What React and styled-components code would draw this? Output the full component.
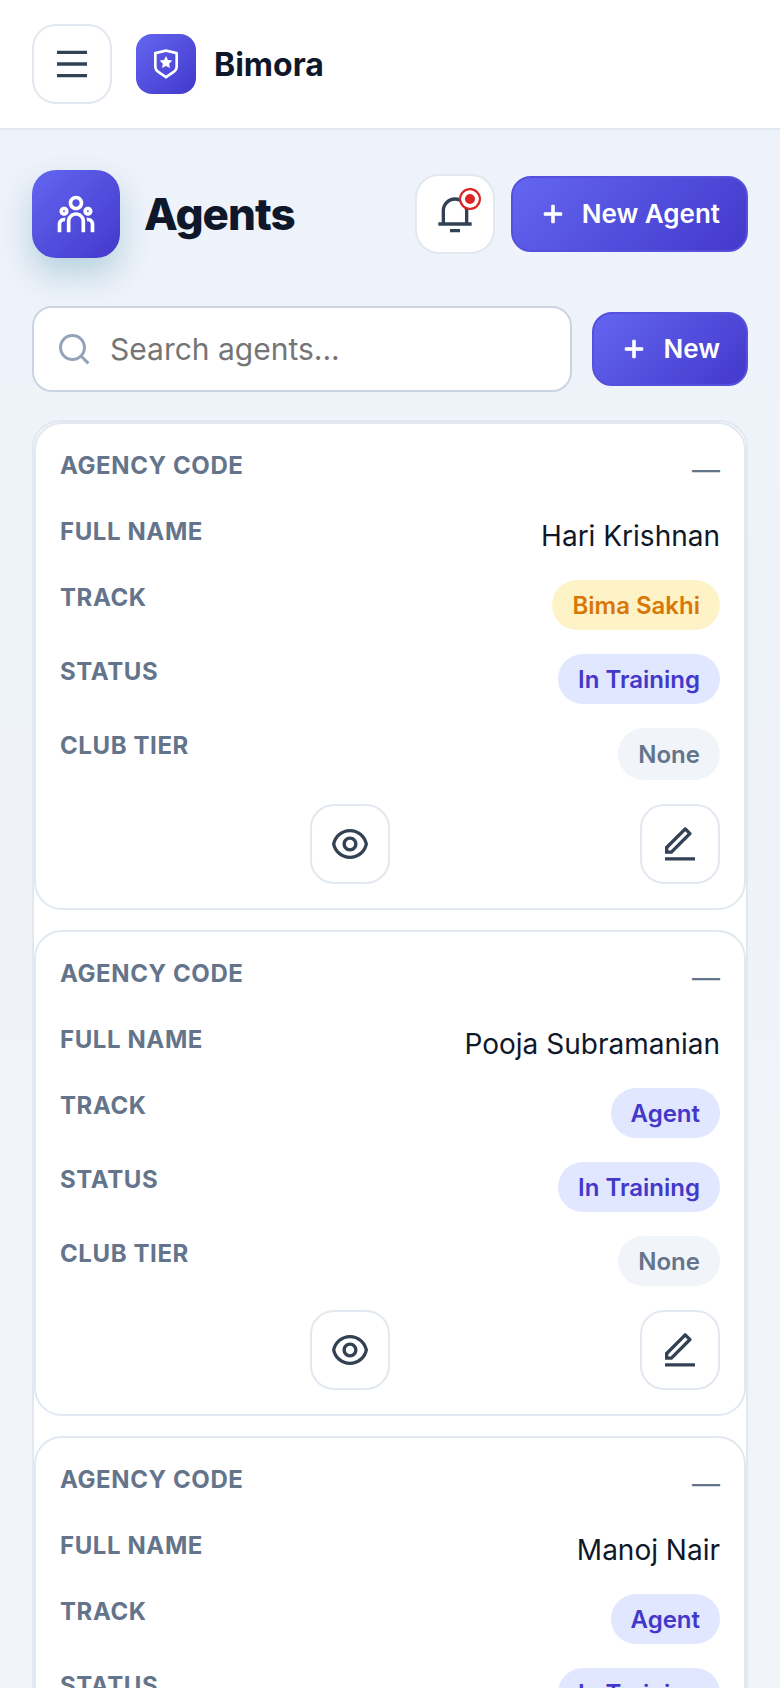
import React from 'react';
import styled, { createGlobalStyle } from 'styled-components';
import {
  RiMenuLine,
  RiShieldStarLine,
  RiTeamLine,
  RiNotification3Line,
  RiAddLine,
  RiSearchLine,
  RiEyeLine,
  RiEditLine,
} from 'react-icons/ri';

const agents = [
  { name: 'Hari Krishnan', track: 'Bima Sakhi', trackTone: 'amber' },
  { name: 'Pooja Subramanian', track: 'Agent', trackTone: 'indigo' },
  { name: 'Manoj Nair', track: 'Agent', trackTone: 'indigo' },
];

const App = () => {
  return (
    <Page>
      <GlobalStyle />
      <Header>
        <SquareButton aria-label='Menu'>
          <RiMenuLine size={40} />
        </SquareButton>
        <LogoTile>
          <RiShieldStarLine size={32} />
        </LogoTile>
        <Brand>Bimora</Brand>
      </Header>
      <Main>
        <TitleRow>
          <TitleTile>
            <RiTeamLine size={44} />
          </TitleTile>
          <Title>Agents</Title>
          <TitleActions>
            <BellButton aria-label='Notifications'>
              <RiNotification3Line size={40} />
              <BellBadge />
            </BellButton>
            <PrimaryButton $height={76}>
              <PlusIcon size={30} />
              New Agent
            </PrimaryButton>
          </TitleActions>
        </TitleRow>
        <SearchRow>
          <SearchBox>
            <RiSearchLine size={36} />
            <SearchInput placeholder='Search agents...' />
          </SearchBox>
          <PrimaryButton $height={74}>
            <PlusIcon size={30} />
            New
          </PrimaryButton>
        </SearchRow>
        <CardList>
          {agents.map((agent, index) => (
            <Card key={agent.name}>
              <Row>
                <Label>Agency code</Label>
                <Dash>—</Dash>
              </Row>
              <Row>
                <Label>Full name</Label>
                <Value>{agent.name}</Value>
              </Row>
              <Row>
                <Label>Track</Label>
                <Pill $tone={agent.trackTone}>{agent.track}</Pill>
              </Row>
              <Row>
                <Label>Status</Label>
                <Pill $tone='indigo'>In Training</Pill>
              </Row>
              <Row>
                <Label>Club tier</Label>
                <Pill $tone='grey' $tall={index === 0}>None</Pill>
              </Row>
              <Actions>
                <SquareButton aria-label='View'>
                  <RiEyeLine size={40} />
                </SquareButton>
                <SquareButton aria-label='Edit'>
                  <RiEditLine size={40} />
                </SquareButton>
              </Actions>
            </Card>
          ))}
        </CardList>
      </Main>
    </Page>
  );
};

export default App;

const tones = {
  amber: { bg: '#fef3c7', fg: '#d97706' },
  indigo: { bg: '#e0e7ff', fg: '#4338ca' },
  grey: { bg: '#f1f5f9', fg: '#64748b' },
};

const gradient = 'linear-gradient(135deg, #6366f1, #4338ca)';

const GlobalStyle = createGlobalStyle`
  * {
    box-sizing: border-box;
  }

  body {
    margin: 0;
    font-family: Inter, "Noto Sans", sans-serif;
    background: #eef2fa;
  }
`;

const Page = styled.div`
  height: 1688px;
  overflow: hidden;
  background: linear-gradient(180deg, #eef2fa, #f1f5f9);
`;

const Header = styled.header`
  height: 130px;
  display: flex;
  align-items: center;
  padding: 0 32px;
  background: #fff;
  border-bottom: 2px solid #e2e8f0;
`;

const SquareButton = styled.button`
  width: 80px;
  height: 80px;
  flex: none;
  display: flex;
  align-items: center;
  justify-content: center;
  padding: 0;
  background: #fff;
  border: 2px solid #e2e8f0;
  border-radius: 24px;
  color: #334155;
`;

const LogoTile = styled.div`
  width: 60px;
  height: 60px;
  margin-left: 24px;
  display: flex;
  align-items: center;
  justify-content: center;
  border-radius: 16px;
  background: ${gradient};
  color: #fff;
`;

const Brand = styled.span`
  margin-left: 18px;
  font-size: 32px;
  font-weight: 700;
  color: #0f172a;
`;

const Main = styled.main`
  padding: 40px 32px 0;
`;

const TitleRow = styled.div`
  display: flex;
  align-items: center;
`;

const TitleTile = styled.div`
  width: 88px;
  height: 88px;
  flex: none;
  display: flex;
  align-items: center;
  justify-content: center;
  border-radius: 24px;
  background: ${gradient};
  color: #fff;
  box-shadow: 0 16px 32px rgba(14, 116, 144, 0.25);
`;

const Title = styled.h1`
  margin: 0 0 0 24px;
  font-size: 44px;
  font-weight: 800;
  letter-spacing: -1px;
  color: #0f172a;
`;

const TitleActions = styled.div`
  margin-left: auto;
  display: flex;
  align-items: center;
  gap: 16px;
`;

const BellButton = styled(SquareButton)`
  position: relative;
`;

const BellBadge = styled.span`
  position: absolute;
  top: 12px;
  right: 12px;
  width: 22px;
  height: 22px;
  border-radius: 50%;
  background: #dc2626;
  border: 2px solid #dc2626;
  box-shadow: inset 0 0 0 4px #fff;
`;

const PrimaryButton = styled.button`
  height: ${(props) => props.$height}px;
  flex: none;
  display: flex;
  align-items: center;
  gap: 14px;
  padding: 0 26px 2px 25px;
  border: 2px solid #5651dc;
  border-radius: 20px;
  background: ${gradient};
  color: #fff;
  font-family: inherit;
  font-size: 26px;
  font-weight: 600;
`;

const PlusIcon = styled(RiAddLine)`
  margin-top: 2px;
  stroke-width: 0.8;
`;

const SearchRow = styled.div`
  margin-top: 48px;
  display: flex;
  align-items: center;
  gap: 20px;
`;

const SearchBox = styled.div`
  flex: 1;
  min-width: 0;
  height: 86px;
  display: flex;
  align-items: center;
  gap: 18px;
  padding: 0 22px;
  background: #fff;
  border: 2px solid #cbd5e1;
  border-radius: 20px;
  color: #94a3b8;
`;

const SearchInput = styled.input`
  flex: 1;
  min-width: 0;
  border: 0;
  outline: 0;
  padding: 0;
  background: transparent;
  font-family: inherit;
  font-size: 30px;

  &::placeholder {
    color: #757575;
  }
`;

const CardList = styled.div`
  margin-top: 28px;
  display: flex;
  flex-direction: column;
  gap: 20px;
  background: #fff;
  border: 2px solid #e2e8f0;
  border-radius: 28px 28px 0 0;
`;

const Card = styled.section`
  display: flex;
  flex-direction: column;
  gap: 24px;
  padding: 24px;
  background: #fff;
  border: 2px solid #e2e8f0;
  border-radius: 28px;
`;

const Row = styled.div`
  display: flex;
  justify-content: space-between;
  align-items: flex-start;
`;

const Label = styled.span`
  font-size: 24px;
  font-weight: 700;
  line-height: 36px;
  text-transform: uppercase;
  letter-spacing: 0.6px;
  color: #64748b;
`;

const Value = styled.span`
  padding-top: 2px;
  font-size: 28px;
  line-height: 40px;
  color: #0f172a;
`;

const Dash = styled(Value)`
  color: #64748b;
`;

const Pill = styled.span`
  padding: 0 20px;
  height: ${(props) => (props.$tall ? 52 : 50)}px;
  display: inline-flex;
  align-items: center;
  border-radius: 26px;
  font-size: 24px;
  font-weight: 600;
  background: ${(props) => tones[props.$tone].bg};
  color: ${(props) => tones[props.$tone].fg};
`;

const Actions = styled.div`
  display: grid;
  grid-template-columns: 1fr 1fr;
  justify-items: end;
`;
